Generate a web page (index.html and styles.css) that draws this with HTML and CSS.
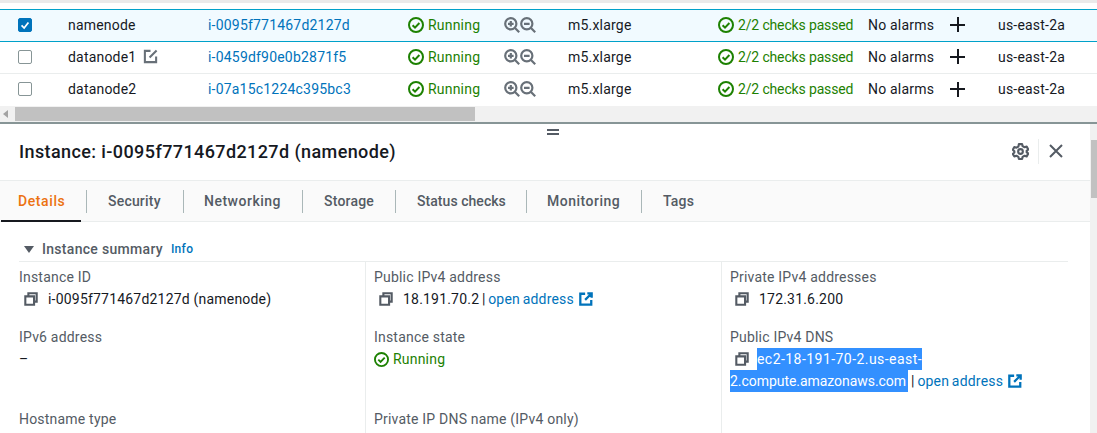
FILE: index.html
```html
<!DOCTYPE html>
<html lang="en">
<head>
    <meta charset="UTF-8">
    <title>Instances</title>
    <link rel="stylesheet" href="styles.css">
</head>
<body>
    <svg class="sprite" width="0" height="0">
        <symbol id="i-ok" viewBox="0 0 16 16"><circle cx="8" cy="8" r="7" fill="none" stroke="currentColor" stroke-width="2"/><path d="M4.6 8.2l2.4 2.4 4.4-4.6" fill="none" stroke="currentColor" stroke-width="2"/></symbol>
        <symbol id="i-in" viewBox="0 0 16 16"><circle cx="6.8" cy="6.8" r="5.6" fill="none" stroke="currentColor" stroke-width="2.200"/><path d="M11 11l4.2 4.2M4 6.8h5.6M6.800 4v5.600" fill="none" stroke="currentColor" stroke-width="2.200"/></symbol>
        <symbol id="i-out" viewBox="0 0 16 16"><circle cx="6.8" cy="6.8" r="5.6" fill="none" stroke="currentColor" stroke-width="2.200"/><path d="M11 11l4.2 4.2M4 6.8h5.6" fill="none" stroke="currentColor" stroke-width="2.200"/></symbol>
        <symbol id="i-copy" viewBox="0 0 16 16"><path d="M5 4V1.500H14.500V11H12M1.500 5H11.500V14.500H1.500z" fill="none" stroke="currentColor" stroke-width="2.400"/></symbol>
        <symbol id="i-ext" viewBox="0 0 16 16"><path d="M7 2H1.500V14.500H14V9M9.500 1.500H14.500V6.500M14 2L7 9" fill="none" stroke="currentColor" stroke-width="2.600"/></symbol>
        <symbol id="i-edit" viewBox="0 0 16 16"><path d="M8 2H2V14H14V8M14.500 1.500L7 9" fill="none" stroke="currentColor" stroke-width="2.200"/></symbol>
    </svg>

    <div class="topstrip"></div>

    <div class="table">
        <div class="row selected">
            <span class="check on"><svg viewBox="0 0 14 14"><path d="M3 7.500l3 3 5-6.500" fill="none" stroke="#fff" stroke-width="2"/></svg></span>
            <span class="name">namenode</span>
            <a class="link">i-0095f771467d2127d</a>
            <span class="ok"><svg class="ico"><use href="#i-ok"/></svg>Running</span>
            <span class="zoom"><svg class="ico"><use href="#i-in"/></svg><svg class="ico"><use href="#i-out"/></svg></span>
            <span>m5.xlarge</span>
            <span class="ok checks"><svg class="ico"><use href="#i-ok"/></svg>2/2 checks passed</span>
            <span>No alarms</span>
            <span class="plus"></span>
            <span>us-east-2a</span>
        </div>
        <div class="row">
            <span class="check"></span>
            <span class="name">datanode1<svg class="ico edit"><use href="#i-edit"/></svg></span>
            <a class="link">i-0459df90e0b2871f5</a>
            <span class="ok"><svg class="ico"><use href="#i-ok"/></svg>Running</span>
            <span class="zoom"><svg class="ico"><use href="#i-in"/></svg><svg class="ico"><use href="#i-out"/></svg></span>
            <span>m5.xlarge</span>
            <span class="ok checks"><svg class="ico"><use href="#i-ok"/></svg>2/2 checks passed</span>
            <span>No alarms</span>
            <span class="plus"></span>
            <span>us-east-2a</span>
        </div>
        <div class="row">
            <span class="check"></span>
            <span class="name">datanode2</span>
            <a class="link">i-07a15c1224c395bc3</a>
            <span class="ok"><svg class="ico"><use href="#i-ok"/></svg>Running</span>
            <span class="zoom"><svg class="ico"><use href="#i-in"/></svg><svg class="ico"><use href="#i-out"/></svg></span>
            <span>m5.xlarge</span>
            <span class="ok checks"><svg class="ico"><use href="#i-ok"/></svg>2/2 checks passed</span>
            <span>No alarms</span>
            <span class="plus"></span>
            <span>us-east-2a</span>
        </div>
    </div>

    <div class="hscroll">
        <span class="arrow-left"></span>
        <span class="hthumb"></span>
    </div>

    <div class="panel">
        <span class="grip"></span>
        <div class="panel-main">
            <div class="panel-head">
                <h2>Instance: i-0095f771467d2127d (namenode)</h2>
                <div class="head-tools">
                    <svg class="gear" viewBox="0 0 16 16"><circle cx="8" cy="8" r="2.200" fill="none" stroke="currentColor" stroke-width="2"/><path d="M6.500 1h3l.5 2 1.800 1 2-.6 1.500 2.600-1.500 1.400v1.200l1.500 1.400-1.500 2.600-2-.6-1.800 1-.5 2h-3l-.5-2-1.800-1-2 .6L.7 10.400 2.200 9V7.800L.7 6.400 2.200 3.800l2 .6L6 3.400z" fill="none" stroke="currentColor" stroke-width="2" stroke-linejoin="round"/></svg>
                    <span class="tool-sep"></span>
                    <svg class="close" viewBox="0 0 16 16"><path d="M2 2l12 12M14 2L2 14" fill="none" stroke="currentColor" stroke-width="2"/></svg>
                </div>
            </div>
            <div class="tabs">
                <span class="tab active">Details</span>
                <span class="tab">Security</span>
                <span class="tab roomy">Networking</span>
                <span class="tab">Storage</span>
                <span class="tab snug">Status checks</span>
                <span class="tab roomy">Monitoring</span>
                <span class="tab">Tags</span>
            </div>
            <div class="summary">
                <div class="summary-title"><span class="caret"></span>Instance summary<a class="info">Info</a></div>
                <div class="grid">
                    <div class="col">
                        <div class="field">
                            <div class="label">Instance ID</div>
                            <div class="value"><svg class="ico copy"><use href="#i-copy"/></svg>i-0095f771467d2127d (namenode)</div>
                        </div>
                        <div class="field tall">
                            <div class="label">IPv6 address</div>
                            <div class="value">–</div>
                        </div>
                        <div class="field">
                            <div class="label">Hostname type</div>
                        </div>
                    </div>
                    <div class="col">
                        <div class="field">
                            <div class="label">Public IPv4 address</div>
                            <div class="value tight"><svg class="ico copy"><use href="#i-copy"/></svg>18.191.70.2 | <a class="link">open address<svg class="ico ext"><use href="#i-ext"/></svg></a></div>
                        </div>
                        <div class="field tall">
                            <div class="label">Instance state</div>
                            <div class="value ok"><svg class="ico state"><use href="#i-ok"/></svg>Running</div>
                        </div>
                        <div class="field">
                            <div class="label">Private IP DNS name (IPv4 only)</div>
                        </div>
                    </div>
                    <div class="col">
                        <div class="field">
                            <div class="label">Private IPv4 addresses</div>
                            <div class="value"><svg class="ico copy"><use href="#i-copy"/></svg>172.31.6.200</div>
                        </div>
                        <div class="field">
                            <div class="label">Public IPv4 DNS</div>
                            <div class="value tight"><svg class="ico copy dns"><use href="#i-copy"/></svg><span class="sel wide">ec2-18-191-70-2.us-east-</span><br><span class="sel narrow">2.compute.amazonaws.com&nbsp;</span> | <a class="link">open address<svg class="ico ext"><use href="#i-ext"/></svg></a></div>
                        </div>
                    </div>
                </div>
            </div>
        </div>
        <div class="vscroll">
            <span class="arrow-up"></span>
            <span class="vthumb"></span>
        </div>
    </div>
</body>
</html>
```

FILE: styles.css
```css
*{
    margin: 0;
    padding: 0;
    box-sizing: border-box;
}
html,body{
    height: 433px;
    overflow: hidden;
}
body{
    background: #fff;
    color: #16191f;
    font-family: "Roboto", "Noto Sans", sans-serif;
    font-size: 14px;
    letter-spacing: .2px;
}
.sprite{
    position: absolute;
}
.ico{
    width: 16px;
    height: 16px;
    flex: none;
}
.link{
    color: #0073bb;
}
.ok{
    color: #1d8102;
    display: flex;
    align-items: center;
    gap: 4px;
}
.topstrip{
    height: 9px;
    border-top: 3px solid #eaeaea;
}

/* table */
.row{
    display: grid;
    grid-template-columns: 68px 140px 200px 96px 64px 150px 150px 82px 48px 1fr;
    align-items: center;
    height: 32px;
    padding-bottom: 2px;
    border-bottom: 1px solid #eaeded;
    white-space: nowrap;
}
.row:last-child{
    border-bottom: 0;
}
.row.selected{
    height: 33px;
    background: #f1faff;
    border-top: 1px solid #00a1c9;
    border-bottom: 1px solid #00a1c9;
}
.check{
    width: 14px;
    height: 14px;
    margin-left: 18px;
    border: 1px solid #879596;
    border-radius: 2px;
    background: #fff;
}
.check.on{
    background: #0073bb;
    border-color: #0073bb;
}
.check svg{
    display: block;
    width: 12px;
    height: 12px;
}
.name{
    display: flex;
    align-items: center;
}
.edit{
    width: 15px;
    height: 15px;
    margin-left: 7px;
    color: #687078;
}
.zoom{
    display: flex;
    color: #687078;
}
.checks{
    letter-spacing: -.15px;
}
.plus{
    width: 15px;
    height: 15px;
    background: linear-gradient(#16191f,#16191f) center/15px 2px no-repeat,
                linear-gradient(#16191f,#16191f) center/2px 15px no-repeat;
}

/* horizontal scrollbar */
.hscroll{
    display: flex;
    align-items: center;
    height: 16px;
    background: #f1f1f1;
    padding-left: 3px;
    gap: 7px;
}
.arrow-left{
    width: 0;
    height: 0;
    border: 4px solid transparent;
    border-right: 5px solid #a3a3a3;
    border-left: 0;
}
.hthumb{
    width: 460px;
    height: 14px;
    background: #c1c1c1;
}

/* details panel */
.panel{
    position: relative;
    display: flex;
    height: 312px;
    border-top: 2px solid #879596;
    overflow: hidden;
}
.grip{
    position: absolute;
    left: 547px;
    top: 5px;
    width: 12px;
    height: 6px;
    border-top: 2px solid #545b64;
    border-bottom: 2px solid #545b64;
}
.panel-main{
    flex: 1;
    min-width: 0;
}
.panel-head{
    display: flex;
    justify-content: space-between;
    align-items: center;
    height: 56px;
    padding: 0 26px 2px 19px;
}
.panel-head h2{
    font-size: 18px;
    font-weight: 500;
    letter-spacing: .4px;
}
.head-tools{
    display: flex;
    align-items: center;
    color: #545b64;
}
.gear{
    width: 17px;
    height: 17px;
}
.tool-sep{
    width: 1px;
    height: 25px;
    margin: 0 9px;
    background: #eaeded;
}
.close{
    width: 16px;
    height: 16px;
}
.tabs{
    display: grid;
    grid-template-columns: 85px 97px 119px 93px 131px 115px 1fr;
    align-items: center;
    height: 42px;
    background: #fafafa;
    border-top: 1px solid #eaeded;
    border-bottom: 1px solid #eaeded;
    padding-left: 1px;
}
.tab{
    position: relative;
    padding-left: 21px;
    line-height: 23px;
    font-weight: 500;
    color: #545b64;
    border-left: 1px solid #aab7b8;
}
.tab.roomy{
    padding-left: 20px;
    letter-spacing: .5px;
}
.tab.snug{
    letter-spacing: .05px;
}
.tab.active{
    padding-left: 17px;
    border-left: 0;
    letter-spacing: .6px;
    color: #ec7211;
}
.tab.active::after{
    content: "";
    position: absolute;
    left: 0;
    right: 5px;
    bottom: -9px;
    height: 2px;
    background: #16191f;
}
.summary{
    padding: 18px 22px 0 19px;
}
.summary-title{
    display: flex;
    align-items: center;
    height: 18px;
    margin-left: 5px;
    font-weight: 500;
    letter-spacing: .3px;
    color: #545b64;
}
.caret{
    width: 0;
    height: 0;
    margin-right: 8px;
    border: 5px solid transparent;
    border-top: 7px solid #545b64;
    border-bottom: 0;
}
.info{
    margin-left: 8px;
    font-size: 12px;
    color: #0073bb;
}
.grid{
    display: grid;
    grid-template-columns: 346px 356px 1fr;
    margin-top: 3px;
    border-top: 1px solid #eaeded;
}
.col{
    padding: 4px 0 0 8px;
    border-left: 1px solid #eaeded;
}
.col:first-child{
    padding-left: 0;
    border-left: 0;
}
.field{
    min-height: 60px;
    line-height: 22px;
}
.field.tall{
    min-height: 82px;
}
.label{
    color: #545b64;
}
.value{
    min-height: 22px;
}
.tight{
    word-spacing: -1px;
}
.copy{
    width: 14px;
    height: 14px;
    margin: 0 10px 0 5px;
    color: #545b64;
    vertical-align: -2px;
}
.state{
    width: 15px;
    height: 15px;
}
.ext{
    width: 14px;
    height: 14px;
    margin-left: 5px;
    vertical-align: -2px;
}
.sel{
    background: #3390ff;
    color: #fff;
    padding: 3px 0;
}
.wide{
    letter-spacing: .45px;
}
.narrow{
    letter-spacing: -.05px;
}
.dns{
    margin-right: 8px;
}

/* panel scrollbar */
.vscroll{
    flex: none;
    display: flex;
    flex-direction: column;
    align-items: flex-end;
    width: 7px;
    background: #f1f1f1;
}
.arrow-up{
    height: 16px;
}
.vthumb{
    width: 6px;
    height: 58px;
    background: #c1c1c1;
}
```
